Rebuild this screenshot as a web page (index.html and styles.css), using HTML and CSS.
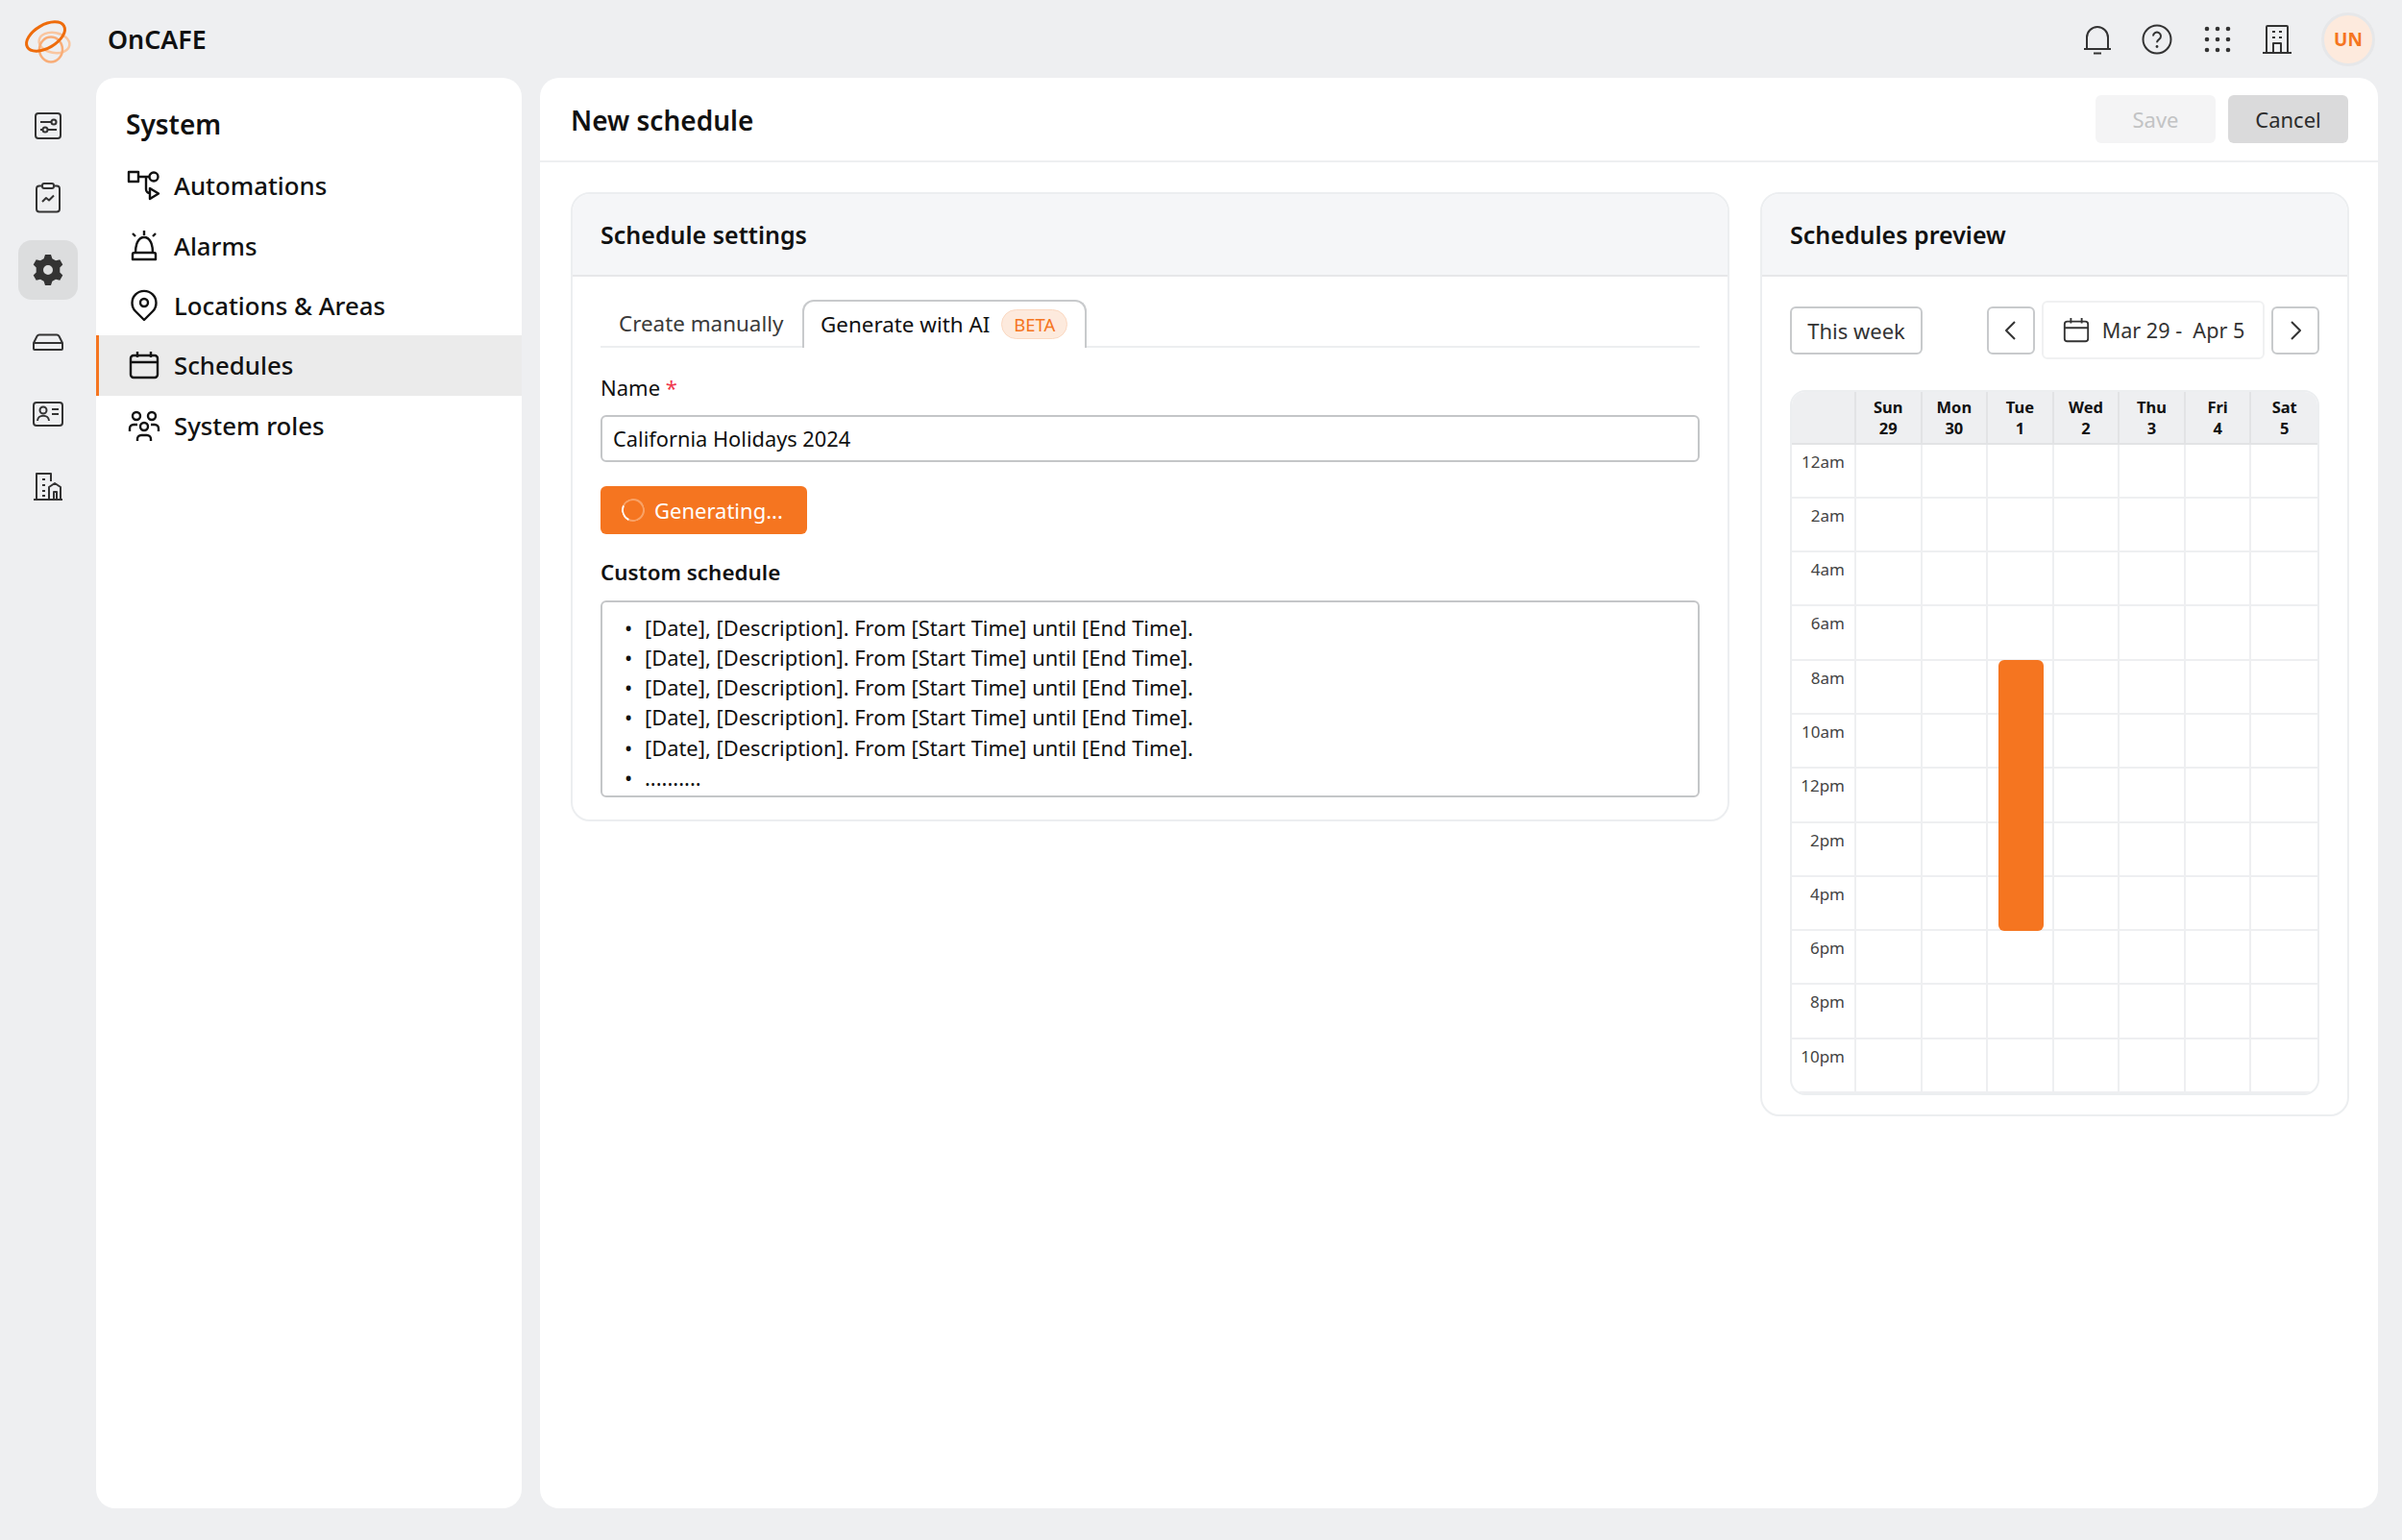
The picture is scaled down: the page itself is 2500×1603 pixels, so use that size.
FILE: index.html

```html
<!DOCTYPE html>
<html lang="en">
  <head>
    <meta charset="UTF-8" />
    <title>New schedule</title>
    <link rel="stylesheet" href="styles.css">
  </head>
  <body>
    <div class="topbar">
      <div class="logo">
        <svg width="62" height="62" viewBox="0 0 62 62" fill="none">
          <ellipse cx="37.500" cy="34.500" rx="16" ry="10.500" stroke="#f9c6a0" stroke-width="2.500" transform="rotate(10 37.500 34.500)"/>
          <ellipse cx="34" cy="41.500" rx="12" ry="13" stroke="#f8ad78" stroke-width="2.500"/>
          <ellipse cx="28.500" cy="28" rx="22" ry="12" stroke="#ee6c0c" stroke-width="3" transform="rotate(-30 28.500 28)"/>
        </svg>
      </div>
      <div class="brand">OnCAFE</div>
      <div class="top-icons">
        <svg class="icon" viewBox="0 0 32 32"><path d="M2 26h28M5 26V14a11 11 0 0 1 22 0v12M12 30.500h8"/></svg>
        <svg class="icon" viewBox="0 0 32 32"><circle cx="16" cy="16" r="14.500"/><path d="M12 12.500a4 4 0 1 1 6.200 3.400c-1.400.9-2.200 1.700-2.200 3.300"/><circle class="dot" cx="16" cy="23.500" r="1.400"/></svg>
        <svg class="icon" viewBox="0 0 32 32"><g class="dot"><circle cx="5" cy="5" r="2.300"/><circle cx="16" cy="5" r="2.300"/><circle cx="27" cy="5" r="2.300"/><circle cx="5" cy="16" r="2.300"/><circle cx="16" cy="16" r="2.300"/><circle cx="27" cy="16" r="2.300"/><circle cx="5" cy="27" r="2.300"/><circle cx="16" cy="27" r="2.300"/><circle cx="27" cy="27" r="2.300"/></g></svg>
        <svg class="icon" viewBox="0 0 32 32"><path d="M1 30h30M5 30V3a1 1 0 0 1 1-1h20a1 1 0 0 1 1 1v27M12 30V20h8v10M11 8h3M18 8h3M11 14h3M18 14h3"/></svg>
        <div class="avatar">UN</div>
      </div>
    </div>

    <div class="rail">
      <div class="rail-item">
        <svg class="icon" viewBox="0 0 32 32"><rect x="3" y="3" width="26" height="26" rx="3"/><path d="M8 12h11M8 20h3M16 20h9"/><circle cx="22" cy="12" r="2.500"/><circle cx="13" cy="20" r="2.500"/></svg>
      </div>
      <div class="rail-item">
        <svg class="icon" viewBox="0 0 32 32"><rect x="4" y="3.500" width="24" height="27" rx="3"/><rect x="10" y="1" width="12" height="5" rx="2" class="fill-rail"/><path d="M10 20l4-4 3 2.500 5-5"/></svg>
      </div>
      <div class="rail-item active">
        <svg class="icon" viewBox="0 0 32 32"><path class="solid" fill-rule="evenodd" d="M13 0h6l1.400 4.200 3.600 2 4.300-1 3 5.200-3 3.200v4.800l3 3.200-3 5.200-4.300-1-3.600 2L19 32h-6l-1.400-4.200-3.600-2-4.300 1-3-5.200 3-3.200v-4.800l-3-3.200 3-5.200 4.300 1 3.600-2zM16 11a5 5 0 1 0 0 10 5 5 0 0 0 0-10z"/></svg>
      </div>
      <div class="rail-item">
        <svg class="icon" viewBox="0 0 32 32"><path d="M1 17l3.500-7a3 3 0 0 1 2.500-1.500h18a3 3 0 0 1 2.500 1.500L31 17v6a1 1 0 0 1-1 1H2a1 1 0 0 1-1-1zM1 17h30"/></svg>
      </div>
      <div class="rail-item">
        <svg class="icon" viewBox="0 0 32 32"><rect x="1" y="4" width="30" height="24" rx="3"/><circle cx="11" cy="12" r="3.500"/><path d="M5 23c0-7 12-7 12 0M20 11h7M20 16h7"/></svg>
      </div>
      <div class="rail-item">
        <svg class="icon" viewBox="0 0 32 32"><path d="M1 30h30M4 30V3h15v8M10 9h3M10 15h3M10 21h3M10 26h3M17 30V17l6-4 6 4v13M22 30v-8h3v8"/></svg>
      </div>
    </div>

    <div class="sidebar">
      <h2>System</h2>
      <a class="nav-item">
        <svg class="icon" viewBox="0 0 32 32"><rect x="1" y="2" width="10" height="10"/><circle cx="27" cy="7" r="4.500"/><path d="M11 7h11.500M19 7v13a4 4 0 0 0 4 4M23 19v11l9-5.500z"/></svg>
        Automations
      </a>
      <a class="nav-item">
        <svg class="icon" viewBox="0 0 32 32"><path d="M8 23c0-9 3-16 9-16s9 7 9 16M7 23h20a2 2 0 0 1 2 2v5H5v-5a2 2 0 0 1 2-2zM17 0v5M5 3l3 3M29 3l-3 3"/></svg>
        Alarms
      </a>
      <a class="nav-item">
        <svg class="icon" viewBox="0 0 32 32"><path d="M17 31L8 22A12.500 12.500 0 1 1 26 22z"/><circle cx="17" cy="13" r="4"/></svg>
        Locations &amp; Areas
      </a>
      <a class="nav-item current">
        <svg class="icon" viewBox="0 0 32 32"><rect x="3" y="6" width="28" height="23" rx="3"/><path d="M3 13h28M10 2v6M24 2v6"/></svg>
        Schedules
      </a>
      <a class="nav-item">
        <svg class="icon" viewBox="0 0 32 32"><circle cx="9" cy="6" r="4"/><circle cx="25" cy="6" r="4"/><circle cx="17" cy="17" r="4"/><path d="M2 22v-3a4 4 0 0 1 4-4h4M32 22v-3a4 4 0 0 0-4-4h-4M10 32v-2a4 4 0 0 1 4-4h6a4 4 0 0 1 4 4v2"/></svg>
        System roles
      </a>
    </div>

    <div class="main">
      <div class="main-header">
        <h1>New schedule</h1>
        <button class="btn btn-save">Save</button>
        <button class="btn btn-cancel">Cancel</button>
      </div>

      <div class="main-body">
        <!-- Settings card -->
        <div class="card settings">
          <div class="card-header">Schedule settings</div>
          <div class="card-body">
            <div class="tabs">
              <div class="tab">Create manually</div>
              <div class="tab selected">Generate with AI <span class="beta">BETA</span></div>
            </div>
            <label class="field-label">Name <span class="req">*</span></label>
            <div class="input">California Holidays 2024</div>
            <button class="generate"><span class="spinner"></span>Generating...</button>
            <div class="field-title">Custom schedule</div>
            <div class="textarea">
              <ul>
                <li>[Date], [Description]. From [Start Time] until [End Time].</li>
                <li>[Date], [Description]. From [Start Time] until [End Time].</li>
                <li>[Date], [Description]. From [Start Time] until [End Time].</li>
                <li>[Date], [Description]. From [Start Time] until [End Time].</li>
                <li>[Date], [Description]. From [Start Time] until [End Time].</li>
                <li>..........</li>
              </ul>
            </div>
          </div>
        </div>

        <!-- Preview card -->
        <div class="card preview">
          <div class="card-header">Schedules preview</div>
          <div class="card-body">
            <div class="toolbar">
              <button class="outline this-week">This week</button>
              <div class="date-nav">
                <button class="outline arrow"><svg class="icon small" viewBox="0 0 24 24"><path d="M16 3L7 12l9 9"/></svg></button>
                <div class="date-range">
                  <svg class="icon cal-icon" viewBox="0 0 32 32"><rect x="3" y="6" width="26" height="22" rx="3"/><path d="M3 13h26M10 2v6M22 2v6"/></svg>
                  Mar 29 -&nbsp; Apr 5
                </div>
                <button class="outline arrow"><svg class="icon small" viewBox="0 0 24 24"><path d="M8 3l9 9-9 9"/></svg></button>
              </div>
            </div>

            <div class="calendar">
              <div class="cal-row cal-head">
                <div></div><div>Sun<br>29</div><div>Mon<br>30</div><div>Tue<br>1</div><div>Wed<br>2</div><div>Thu<br>3</div><div>Fri<br>4</div><div>Sat<br>5</div>
              </div>
              <div class="cal-row"><div class="time">12am</div><div></div><div></div><div></div><div></div><div></div><div></div><div></div></div>
              <div class="cal-row"><div class="time">2am</div><div></div><div></div><div></div><div></div><div></div><div></div><div></div></div>
              <div class="cal-row"><div class="time">4am</div><div></div><div></div><div></div><div></div><div></div><div></div><div></div></div>
              <div class="cal-row"><div class="time">6am</div><div></div><div></div><div></div><div></div><div></div><div></div><div></div></div>
              <div class="cal-row"><div class="time">8am</div><div></div><div></div><div></div><div></div><div></div><div></div><div></div></div>
              <div class="cal-row"><div class="time">10am</div><div></div><div></div><div></div><div></div><div></div><div></div><div></div></div>
              <div class="cal-row"><div class="time">12pm</div><div></div><div></div><div></div><div></div><div></div><div></div><div></div></div>
              <div class="cal-row"><div class="time">2pm</div><div></div><div></div><div></div><div></div><div></div><div></div><div></div></div>
              <div class="cal-row"><div class="time">4pm</div><div></div><div></div><div></div><div></div><div></div><div></div><div></div></div>
              <div class="cal-row"><div class="time">6pm</div><div></div><div></div><div></div><div></div><div></div><div></div><div></div></div>
              <div class="cal-row"><div class="time">8pm</div><div></div><div></div><div></div><div></div><div></div><div></div><div></div></div>
              <div class="cal-row"><div class="time">10pm</div><div></div><div></div><div></div><div></div><div></div><div></div><div></div></div>
              <div class="event"></div>
            </div>
          </div>
        </div>
      </div>
    </div>
  </body>
</html>
```

FILE: styles.css

```css
/* Global */
* {
  box-sizing: border-box;
}
body {
  margin: 0;
  height: 1603px;
  padding-bottom: 33px;
  background-color: #eeeff1;
  font-family: "Noto Sans", sans-serif;
  color: #111;
  display: grid;
  grid-template-columns: 100px 443px 1fr;
  grid-template-rows: 81px 1fr;
  overflow: hidden;
}
h1, h2 {
  margin: 0;
  font-weight: 600;
}
button {
  font-family: inherit;
  cursor: pointer;
}

/* Icons */
.icon {
  width: 32px;
  height: 32px;
  fill: none;
  stroke: #333;
  stroke-width: 2;
  stroke-linejoin: round;
  flex: none;
}
.icon.small {
  width: 24px;
  height: 24px;
}
.icon .dot {
  fill: #333;
  stroke: none;
}
.icon .solid {
  fill: #333;
  stroke: none;
}
.icon .fill-rail {
  fill: #eeeff1;
}

/* Top bar */
.topbar {
  grid-column: 1 / 4;
  display: flex;
  align-items: center;
}
.logo {
  width: 100px;
  padding-left: 19px;
  display: flex;
}
.brand {
  margin-left: 12px;
  font-size: 26.800px;
  font-weight: 600;
}
.top-icons {
  margin-left: auto;
  margin-right: 28px;
  display: flex;
  align-items: center;
  gap: 30.200px;
}
.avatar {
  width: 56px;
  height: 56px;
  border-radius: 50%;
  background-color: #fdeadd;
  border: 3px solid #e6e7e9;
  color: #f57520;
  font-size: 19px;
  font-weight: 700;
  display: flex;
  align-items: center;
  justify-content: center;
}

/* Left rail */
.rail {
  display: flex;
  flex-direction: column;
  align-items: center;
  padding-top: 19px;
  gap: 13px;
}
.rail-item {
  width: 62px;
  height: 62px;
  border-radius: 14px;
  display: flex;
  align-items: center;
  justify-content: center;
}
.rail-item.active {
  background-color: #dcddde;
}

/* Sidebar */
.sidebar {
  background-color: #fff;
  border-radius: 20px;
  padding-top: 27.500px;
}
.sidebar h2 {
  font-size: 28px;
  line-height: 40px;
  padding-left: 31px;
  margin-bottom: 13.500px;
}
.nav-item {
  display: flex;
  align-items: center;
  gap: 16px;
  height: 62.400px;
  padding-left: 33px;
  font-size: 25.800px;
  font-weight: 500;
}
.nav-item .icon {
  stroke: #111;
  stroke-width: 2.400;
  overflow: visible;
}
.nav-item.current {
  background-color: #ebebeb;
  border-left: 3px solid #f57520;
  padding-left: 30px;
}

/* Main panel */
.main {
  min-width: 0;
  margin-left: 19px;
  margin-right: 25px;
  background-color: #fff;
  border-radius: 20px;
}
.main-header {
  height: 88px;
  display: flex;
  align-items: center;
  gap: 13px;
  padding: 0 31px 0 32px;
  border-bottom: 2px solid #eeeff1;
}
.main-header h1 {
  font-size: 28px;
  margin: 2px auto 0 0;
}
.btn {
  width: 125px;
  height: 50px;
  border: none;
  border-radius: 6px;
  font-size: 22px;
}
.btn-save {
  background-color: #f4f4f5;
  color: #c2c3c4;
}
.btn-cancel {
  background-color: #dadadb;
  color: #2c2c2c;
}
.main-body {
  display: flex;
  align-items: flex-start;
  gap: 32px;
  padding: 31px 30px 31px 32px;
}

/* Cards */
.card {
  border: 2px solid #eceef0;
  border-radius: 20px;
  overflow: hidden;
}
.settings {
  width: 1206px;
  height: 654.500px;
  flex: none;
}
.preview {
  flex: 1;
  min-width: 0;
  height: 962px;
}
.card-header {
  height: 86px;
  background-color: #f5f6f8;
  border-bottom: 2px solid #e6e7e9;
  padding: 0 29px;
  display: flex;
  align-items: center;
  font-size: 25px;
  font-weight: 600;
}
.card-body {
  padding: 25px 29px;
}
.settings .card-body {
  padding-top: 23.500px;
}

/* Tabs */
.tabs {
  display: flex;
  height: 50px;
  border-bottom: 2px solid #eceef0;
  font-size: 22.400px;
}
.tab {
  width: 210px;
  height: 50px;
  padding-left: 19px;
  display: flex;
  align-items: center;
  color: #3a3a3a;
}
.tab.selected {
  width: 296px;
  border: 2px solid #c8cacc;
  border-bottom: none;
  border-radius: 12px 12px 0 0;
  padding-left: 17px;
  color: #111;
  background-color: #fff;
}
.beta {
  margin-left: 12px;
  padding: 0 12px;
  height: 31px;
  line-height: 29px;
  font-size: 18.500px;
  color: #f57520;
  background-color: #fdeadd;
  border: 1px solid #fbd9c2;
  border-radius: 16px;
}

/* Form */
.field-label {
  display: block;
  margin-top: 25px;
  font-size: 22px;
  line-height: 32px;
}
.req {
  color: #f0394c;
}
.input {
  margin-top: 13px;
  height: 49px;
  padding: 0 11px;
  border: 2px solid #c4c6c8;
  border-radius: 6px;
  font-size: 21.800px;
  line-height: 45px;
}
.generate {
  margin-top: 25px;
  width: 215px;
  height: 50px;
  border: none;
  border-radius: 6px;
  background-color: #f57520;
  color: #fff;
  font-size: 22px;
  display: flex;
  align-items: center;
  padding-left: 22px;
}
.spinner {
  width: 24px;
  height: 24px;
  margin-right: 10px;
  border-radius: 50%;
  border: 2px solid #f9a266;
  border-left-color: #fff;
  transform: rotate(-20deg);
}
.field-title {
  margin-top: 24px;
  font-size: 22.400px;
  font-weight: 600;
  line-height: 32px;
}
.textarea {
  margin-top: 13px;
  height: 205.500px;
  border: 2px solid #c4c6c8;
  border-radius: 6px;
  overflow: hidden;
  font-size: 21.900px;
  line-height: 31.300px;
}
.textarea ul {
  margin: 0;
  padding: 11px 0 0 23px;
  list-style: none;
}
.textarea li {
  display: flex;
}
.textarea li::before {
  content: "•";
  width: 21px;
  font-size: 22px;
  flex: none;
}

/* Preview toolbar */
.toolbar {
  display: flex;
  align-items: center;
}
.outline {
  height: 50px;
  background-color: #fff;
  border: 2px solid #c8cacc;
  border-radius: 6px;
  font-size: 22px;
  color: #333;
}
.this-week {
  width: 138px;
  padding: 0;
}
.date-nav {
  margin-left: auto;
  display: flex;
  align-items: center;
  gap: 7px;
}
.arrow {
  width: 50px;
  padding: 0;
  display: flex;
  align-items: center;
  justify-content: center;
}
.date-range {
  width: 232px;
  height: 61px;
  border: 2px solid #f0f1f2;
  border-radius: 6px;
  font-size: 21.600px;
  color: #333;
  display: flex;
  align-items: center;
  justify-content: center;
  gap: 12px;
}
.cal-icon {
  width: 30px;
  height: 30px;
}

/* Calendar */
.calendar {
  position: relative;
  margin-top: 31.500px;
  border: 2px solid #eceef0;
  border-radius: 16px;
  overflow: hidden;
}
.cal-row {
  display: grid;
  grid-template-columns: 67px repeat(7, 1fr);
  height: 56.300px;
  border-bottom: 2px solid #eeeff1;
}
.cal-row:last-of-type {
  border-bottom: none;
}
.cal-row > div {
  border-right: 2px solid #eeeff1;
}
.cal-row > div:last-child {
  border-right: none;
}
.cal-head {
  height: 55px;
  background-color: #eeeff1;
  border-bottom-color: #e2e3e5;
  font-size: 16.500px;
  font-weight: 700;
  line-height: 22px;
  text-align: center;
}
.cal-head > div {
  border-right-color: #e2e3e5;
  padding-top: 5px;
}
.time {
  font-size: 17px;
  line-height: 24px;
  color: #444;
  text-align: right;
  padding: 6px 10px 0 0;
}
.event {
  position: absolute;
  left: 215px;
  top: 279.500px;
  width: 47px;
  height: 282px;
  border-radius: 6px;
  background-color: #f57520;
}
```
